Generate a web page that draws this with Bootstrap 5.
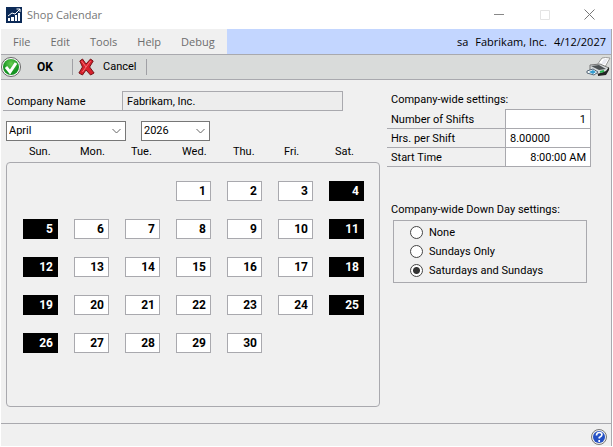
<!DOCTYPE html>
<html lang="en">
<head>
<meta charset="utf-8">
<meta name="viewport" content="width=device-width, initial-scale=1">
<title>Shop Calendar</title>
<link href="https://cdn.jsdelivr.net/npm/bootstrap@5.3.0/dist/css/bootstrap.min.css" rel="stylesheet">
<style>
:root { --line: #a9a9ae; --face: #f0f0f0; }
body { font: 11px/16px Roboto, "Liberation Sans", sans-serif; color: #000; background: #fff; }
button, input, select { font: inherit; color: inherit; }
svg { display: block; flex: none; }
.window { min-height: 100vh; padding: 0 1px 1px; }
.titlebar { height: 29px; padding-left: 5px; font: 11px/16px "Open Sans", sans-serif; color: #777; }
.titlebar h1 { font: inherit; margin: 0 0 0 5px; }
.win-btn { width: 45px; height: 26px; padding: 0; border: 0; background: none; display: flex; align-items: center; justify-content: center; }
.frame { background: var(--face); border-right: 1px solid var(--line); }
.menus { height: 25px; font: 11px/16px "Open Sans", sans-serif; }
.menus nav { width: 226px; padding-left: 12px; gap: 20px; }
.menus a { color: #6d6d6d; text-decoration: none; }
.session { background: #c3d6ff; padding-right: 5px; gap: 7px; }
.tools { height: 26px; background: #d9dbda; border-top: 1px solid var(--line); border-bottom: 1px solid var(--line); }
.tool { border: 0; background: none; padding: 0; height: 24px; display: flex; align-items: center; }
.tool-ok { font-size: 12px; gap: 15px; width: 71px; }
.tool-cancel { margin-left: 5px; gap: 8px; width: 68px; }
.sep { width: 1px; height: 16px; background: #a0a0a5; }
.side { width: 204px; }
.content { padding: 11px 20px 16px 2px; gap: 7px; }
.name-row label { width: 119px; height: 20px; padding: 3px 0 0 4px; border-bottom: 1px solid var(--line); }
.name-row input { height: 20px; border: 1px solid var(--line); background: #ededed; padding: 0 4px; margin-right: 37px; min-width: 0; border-radius: 0; }
.picks { margin-top: 10px; gap: 15px; }
.pick { height: 20px; border: 1px solid #777; border-radius: 0; padding: 0 16px 0 2px; appearance: none; line-height: 18px;
  background: #fff url("data:image/svg+xml,%3Csvg xmlns='http://www.w3.org/2000/svg' width='9' height='6'%3E%3Cpath d='M.5 1l4 4 4-4' fill='none' stroke='%23666'/%3E%3C/svg%3E") no-repeat right 4px center; }
.pick-month { width: 120px; }
.pick-year { width: 69px; }
.indent { margin-left: 3px; }
.week { display: grid; grid-template-columns: repeat(7, 1fr); column-gap: 16px; height: 21px; padding: 3px 16px 0 17px; }
.week span { padding-left: 6px; white-space: nowrap; }
.month { border: 1px solid var(--line); border-radius: 4px; }
.days { display: grid; grid-template-columns: repeat(7, 1fr); gap: 18px 16px; padding: 18px 15px 18px 16px; }
.day { height: 20px; border: 1px solid var(--line); background: #fff; padding: 0 4px 0 0; text-align: right; font: bold 12px/18px Roboto, "Liberation Sans", sans-serif; }
.day.down { background: #000; border-color: #000; color: #fff; }
.first { grid-column-start: 4; }
.setting { border-bottom: 1px solid var(--line); height: 19px; }
.setting label { width: 118px; padding: 2px 0 0 4px; white-space: nowrap; }
.setting input { width: 86px; height: 18px; border: 0; border-left: 1px solid var(--line); border-right: 1px solid var(--line); border-radius: 0; padding: 0 4px; background: #fff; }
.setting:first-of-type input { border-top: 1px solid var(--line); height: 19px; margin-top: -1px; }
.group-title { font: inherit; margin: 0 0 2px 4px; padding-top: 1px; float: none; width: auto; white-space: nowrap; }
.downs { margin-top: 34px; }
.options { border: 1px solid var(--line); margin: 0 4px 0 6px; padding: 2px 0 2px 16px; }
.options label { height: 19px; gap: 6px; }
.options input { appearance: none; width: 13px; height: 13px; margin: 0; border: 1px solid #444; border-radius: 50%; background: #fff; }
.options input:checked { background: radial-gradient(circle, #333 0 3px, #fff 4px); }
.status { border-top: 1px solid var(--line); height: 23px; padding: 4px 4px 0 0; }
</style>
<script src="https://cdn.jsdelivr.net/npm/bootstrap@5.3.0/dist/js/bootstrap.bundle.min.js"></script>
</head>
<body>
<div class="window d-flex flex-column">
  <header class="titlebar d-flex align-items-center">
    <svg width="16" height="16" viewBox="0 0 16 16"><path fill="#0c2a57" d="M0 0h16v16H0z"/><path fill="#fff" d="M2 11h2v3H2zM5 10h3v4H5zM9 8h2v6H9zM12 6h2v8h-2z"/><path d="M2 9l4-3 3 1 5-5M10.500 2H14v3" fill="none" stroke="#fff"/></svg>
    <h1>Shop Calendar</h1>
    <div class="d-flex ms-auto">
      <button class="win-btn" type="button" aria-label="Minimize"><svg width="11" height="11"><path d="M0 5.500h10" stroke="#888"/></svg></button>
      <button class="win-btn" type="button" aria-label="Maximize" disabled><svg width="10" height="10"><path d="M.5.5h9v9h-9z" fill="none" stroke="#e4e4e4"/></svg></button>
      <button class="win-btn" type="button" aria-label="Close"><svg width="11" height="11"><path d="M.5.5l10 10M10.500.5l-10 10" stroke="#777"/></svg></button>
    </div>
  </header>
  <div class="frame d-flex flex-column flex-grow-1">
    <div class="menus d-flex">
      <nav class="d-flex align-items-center"><a href="#">File</a><a href="#">Edit</a><a href="#">Tools</a><a href="#">Help</a><a href="#">Debug</a></nav>
      <div class="session d-flex flex-grow-1 align-items-center justify-content-end"><span>sa</span><span>Fabrikam, Inc.</span><span>4/12/2027</span></div>
    </div>
    <div class="tools d-flex align-items-center">
      <button class="tool tool-ok fw-bold" type="button">
        <svg width="21" height="22" viewBox="0 0 21 22"><defs><radialGradient id="g" cx=".5" cy=".3"><stop stop-color="#67ce50"/><stop offset="1" stop-color="#159322"/></radialGradient></defs><circle cx="10" cy="11" r="9.500" fill="#fff" stroke="#666"/><circle cx="10" cy="11" r="8" fill="url(#g)"/><path d="M5 11l4 5 6-9" fill="none" stroke="#fff" stroke-width="3"/></svg>
        OK</button>
      <span class="sep"></span>
      <button class="tool tool-cancel" type="button">
        <svg width="17" height="18" viewBox="0 0 19 18" preserveAspectRatio="none"><path d="M2 3l3-2 4 5 5-5 3 2-4 6 5 6-4 2-5-5-4 5-4-2 4-6z" fill="#d8202c" stroke="#701014"/><path d="M4 3l5 6 5-6M5 14l4-5" fill="none" stroke="#f6737a"/></svg>
        Cancel</button>
      <span class="sep"></span>
      <button class="tool ms-auto" type="button" aria-label="Print">
        <svg width="25" height="20" viewBox="0 0 25 20"><path d="M11 8l5-7q3-1 8 0l-5 9z" fill="#fff" stroke="#999"/><path d="M15 7l3-5 4 0-3 5z" fill="#e9eaf2"/><path d="M4 8l10-1 9 4-3 5-8 1-8-4z" fill="#d4d8da" stroke="#777"/><path d="M5 9l8-1 7 4-7 1z" fill="#4b5053"/><path d="M20 14l3-4v3l-3 5-8 1v-2z" fill="#222"/><path d="M1 14l6-2 5 3-4 3-7-2z" fill="#fff" stroke="#567"/><path d="M3 15l4-2 3 2-3 2z" fill="#319bd0"/><path d="M14 15l4-1" stroke="#25b14a" stroke-width="2"/></svg>
      </button>
    </div>
    <main class="content d-flex flex-grow-1">
      <section class="d-flex flex-column flex-grow-1">
        <div class="name-row d-flex"><label for="company">Company Name</label><input id="company" class="flex-grow-1" value="Fabrikam, Inc." readonly></div>
        <div class="picks indent d-flex">
          <select class="pick pick-month" aria-label="Month"><option>April</option></select>
          <select class="pick pick-year" aria-label="Year"><option>2026</option></select>
        </div>
        <div class="week indent"><span>Sun.</span><span>Mon.</span><span>Tue.</span><span>Wed.</span><span>Thu.</span><span>Fri.</span><span>Sat.</span></div>
        <div class="month indent flex-grow-1">
          <div class="days">
            <button class="day first">1</button><button class="day">2</button><button class="day">3</button><button class="day down">4</button>
            <button class="day down">5</button><button class="day">6</button><button class="day">7</button><button class="day">8</button><button class="day">9</button><button class="day">10</button><button class="day down">11</button>
            <button class="day down">12</button><button class="day">13</button><button class="day">14</button><button class="day">15</button><button class="day">16</button><button class="day">17</button><button class="day down">18</button>
            <button class="day down">19</button><button class="day">20</button><button class="day">21</button><button class="day">22</button><button class="day">23</button><button class="day">24</button><button class="day down">25</button>
            <button class="day down">26</button><button class="day">27</button><button class="day">28</button><button class="day">29</button><button class="day">30</button>
          </div>
        </div>
      </section>
      <section class="side flex-shrink-0">
        <h2 class="group-title">Company-wide settings:</h2>
        <div class="setting d-flex"><label for="shifts">Number of Shifts</label><input id="shifts" class="text-end" value="1"></div>
        <div class="setting d-flex"><label for="hours">Hrs. per Shift</label><input id="hours" value="8.00000"></div>
        <div class="setting d-flex"><label for="start">Start Time</label><input id="start" class="text-end" value="8:00:00 AM"></div>
        <fieldset class="downs">
          <legend class="group-title">Company-wide Down Day settings:</legend>
          <div class="options">
            <label class="d-flex align-items-center"><input type="radio" name="down">None</label>
            <label class="d-flex align-items-center"><input type="radio" name="down">Sundays Only</label>
            <label class="d-flex align-items-center"><input type="radio" name="down" checked>Saturdays and Sundays</label>
          </div>
        </fieldset>
      </section>
    </main>
    <footer class="status d-flex align-items-center justify-content-end">
      <button class="tool" type="button" aria-label="Help"><svg width="16" height="16" viewBox="0 0 16 16"><circle cx="8" cy="8" r="7.500" fill="#eee" stroke="#777"/><circle cx="8" cy="8" r="6" fill="#2450c4"/><path d="M5.500 6.500q0-3 2.800-3t2.600 2.200q0 1.400-2.600 2.800v1M8.200 11v2" fill="none" stroke="#fff" stroke-width="1.700"/></svg></button>
    </footer>
  </div>
</div>
</body>
</html>
